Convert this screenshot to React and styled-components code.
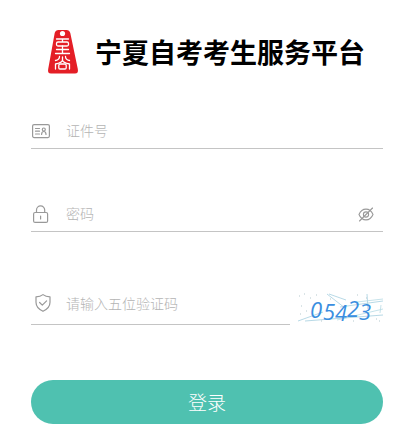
import React, { useState } from "react";
import styled, { createGlobalStyle } from "styled-components";

const GlobalStyle = createGlobalStyle`
  * {
    box-sizing: border-box;
  }

  body {
    margin: 0;
    background: #fff;
    font-family: "Liberation Sans", "Noto Sans CJK SC", sans-serif;
  }
`;

const Page = styled.main`
  padding: 28px 24px 16px 31px;
`;

const Header = styled.header`
  display: flex;
  align-items: center;
  gap: 16px;
  padding-left: 16px;
  height: 48px;
`;

const Title = styled.h1`
  margin: 0;
  font-family: "Noto Sans CJK SC", sans-serif;
  font-size: 27px;
  font-weight: 700;
  line-height: 48px;
  color: #000;
  white-space: nowrap;
`;

const Form = styled.form`
  display: flex;
  flex-direction: column;
  padding-top: 37px;
`;

const Field = styled.div`
  flex: 1;
  display: flex;
  align-items: center;
  gap: 15px;
  min-width: 0;
  height: ${({ $tall }) => ($tall ? "42px" : "36px")};
  border-bottom: 1px solid #c4c4c4;
`;

const Row = styled.div`
  display: flex;
  gap: 7px;
  margin-bottom: ${({ $space }) => $space};
`;

const Label = styled.label`
  display: flex;
  flex: none;
`;

const Input = styled.input`
  flex: 1;
  min-width: 0;
  height: 32px;
  padding: 0 0 2px;
  border: 0;
  outline: none;
  background: transparent;
  font-family: "Noto Sans CJK SC", sans-serif;
  font-size: 14px;
  font-weight: 300;
  color: #333;

  &::placeholder {
    color: #b4b4b4;
    opacity: 1;
  }
`;

const EyeBtn = styled.button`
  display: flex;
  margin-right: 8px;
  padding: 0;
  border: 0;
  background: none;
  cursor: pointer;
`;

const CaptchaBtn = styled.button`
  flex: none;
  display: flex;
  padding: 0;
  border: 0;
  background: none;
  cursor: pointer;
`;

const CaptchaText = styled.text`
  font-family: "Open Sans", "Noto Sans", sans-serif;
  font-style: italic;
  font-size: 22px;
  fill: #3a8ee0;
`;

const LoginBtn = styled.button`
  height: 44px;
  padding: 0;
  border: 0;
  border-radius: 22px;
  background: #4fc1b0;
  color: #fff;
  font-family: "Noto Sans CJK SC", sans-serif;
  font-size: 19px;
  font-weight: 300;
  line-height: 44px;
  cursor: pointer;
`;

const Icon = ({ children }) => (
  <svg
    width="20"
    height="20"
    viewBox="0 0 20 20"
    fill="none"
    stroke="#999"
    strokeWidth="1.2"
    strokeLinecap="round"
    strokeLinejoin="round"
    aria-hidden="true"
  >
    {children}
  </svg>
);

const Logo = () => (
  <svg width="32" height="46" viewBox="0 0 32 46" aria-hidden="true">
    <path
      d="M11.500 1h8c2 0 3.200 1 3.800 3l7.500 36c.6 3-.3 4.500-2.800 4.500H4c-2.500 0-3.400-1.500-2.800-4.500L7.700 4c.6-2 1.800-3 3.800-3z"
      fill="#e41e26"
    />
    <circle cx="15.500" cy="4.500" r="2.600" fill="#fff" />
    <g
      fill="none"
      stroke="#fff"
      strokeWidth="1.300"
      strokeLinecap="round"
      strokeLinejoin="round"
    >
      <path d="M9.500 10h12M15.500 10v3M11 13h9q1.500 0 1.500 1.500v1q0 1.500-1.500 1.500h-9q-1.500 0-1.500-1.500v-1q0-1.500 1.500-1.500z" />
      <path d="M15.500 17v7.500M9.500 20.500h12M8.500 24.500h14" />
      <path d="M12.500 27.500c0 2.500-1 3.500-4 4M18.500 27.500c0 2.500 1 3.500 4 4M15.500 28v3c0 2-2 3-7 4v5M15.500 31c0 2 2 3 7 4v5" />
      <path d="M13 35h5q1.200 0 1.200 1.200v2.600q0 1.200-1.200 1.200h-5q-1.200 0-1.200-1.200v-2.600q0-1.200 1.200-1.200z" />
    </g>
  </svg>
);

const IdIcon = () => (
  <Icon>
    <rect x="1.6" y="3.6" width="16.8" height="13" rx="1.5" />
    <path d="M4.500 7.500h4M4.500 10.200h4M4.500 13h4" />
    <circle cx="12.8" cy="8.5" r="1.5" />
    <path d="M10.600 13.500c0-4 4.400-4 4.400 0" />
  </Icon>
);

const LockIcon = () => (
  <Icon>
    <rect x="2.6" y="8.5" width="14" height="9.9" rx="1.5" />
    <path d="M5.500 8.500V6a4.100 4.100 0 0 1 8.200 0v2.500M9.600 12v3" />
  </Icon>
);

const ShieldIcon = () => (
  <Icon>
    <path d="M12 .6c2 1.600 4.500 2.200 7 2.200v5.500c0 4.200-2.600 7-7 9-4.400-2-7-4.800-7-9V2.800c2.500 0 5-.6 7-2.200z" />
    <path d="M8.600 8.500l2.700 2.700 4.300-4.300" />
  </Icon>
);

const EyeIcon = () => (
  <svg
    width="18"
    height="18"
    viewBox="0 0 18 18"
    fill="none"
    stroke="#999"
    strokeWidth="1.1"
    strokeLinecap="round"
    aria-hidden="true"
  >
    <path d="M2 9.500c1.500-3.600 4-5.400 7-5.400s5.500 1.800 7 5.400c-1.500 3.600-4 5.400-7 5.400s-5.500-1.800-7-5.400z" />
    <circle cx="9" cy="9.5" r="2.6" />
    <path d="M2.500 16l13-13" />
  </svg>
);

const Captcha = () => (
  <svg width="86" height="46" viewBox="0 0 86 46" aria-hidden="true">
    <g fill="none" stroke="#a5cfe0" strokeWidth="0.8">
      <path d="M1 38L26 29M43 24l43-6M8 38l78-6M30 11l18 14M32 11l17 6M70 11l1 15" />
      <path d="M40 37l46-11M60 19l26-3M84 22l-1 8" stroke="#b8dae4" />
    </g>
    <path
      d="M2 13h1M7 11h1M13 15h1M19 12h1M4 23h1M9 28h1M3 31h1M24 38h1M33 16h1M60 12h1M69 15h1M79 36h1M56 38h1M82 38h1"
      stroke="#b5c9ce"
    />
    <CaptchaText x="13 26 38 50 62" y="35 37 38 34 37">
      05423
    </CaptchaText>
  </svg>
);

const App = () => {
  const [visible, setVisible] = useState(false);

  return (
    <>
      <GlobalStyle />
      <Page>
        <Header>
          <Logo />
          <Title>宁夏自考考生服务平台</Title>
        </Header>

        <Form onSubmit={(e) => e.preventDefault()}>
          <Row $space="47px">
            <Field>
              <Label htmlFor="idNumber" aria-label="证件号">
                <IdIcon />
              </Label>
              <Input id="idNumber" type="text" placeholder="证件号" />
            </Field>
          </Row>

          <Row $space="51px">
            <Field>
              <Label htmlFor="password" aria-label="密码">
                <LockIcon />
              </Label>
              <Input
                id="password"
                type={visible ? "text" : "password"}
                placeholder="密码"
              />
              <EyeBtn
                type="button"
                aria-label="显示密码"
                onClick={() => setVisible(!visible)}
              >
                <EyeIcon />
              </EyeBtn>
            </Field>
          </Row>

          <Row $space="51px">
            <Field $tall>
              <Label htmlFor="captcha" aria-label="验证码">
                <ShieldIcon />
              </Label>
              <Input id="captcha" type="text" placeholder="请输入五位验证码" />
            </Field>
            <CaptchaBtn type="button" aria-label="刷新验证码">
              <Captcha />
            </CaptchaBtn>
          </Row>

          <LoginBtn type="submit">登录</LoginBtn>
        </Form>
      </Page>
    </>
  );
};

export default App;
